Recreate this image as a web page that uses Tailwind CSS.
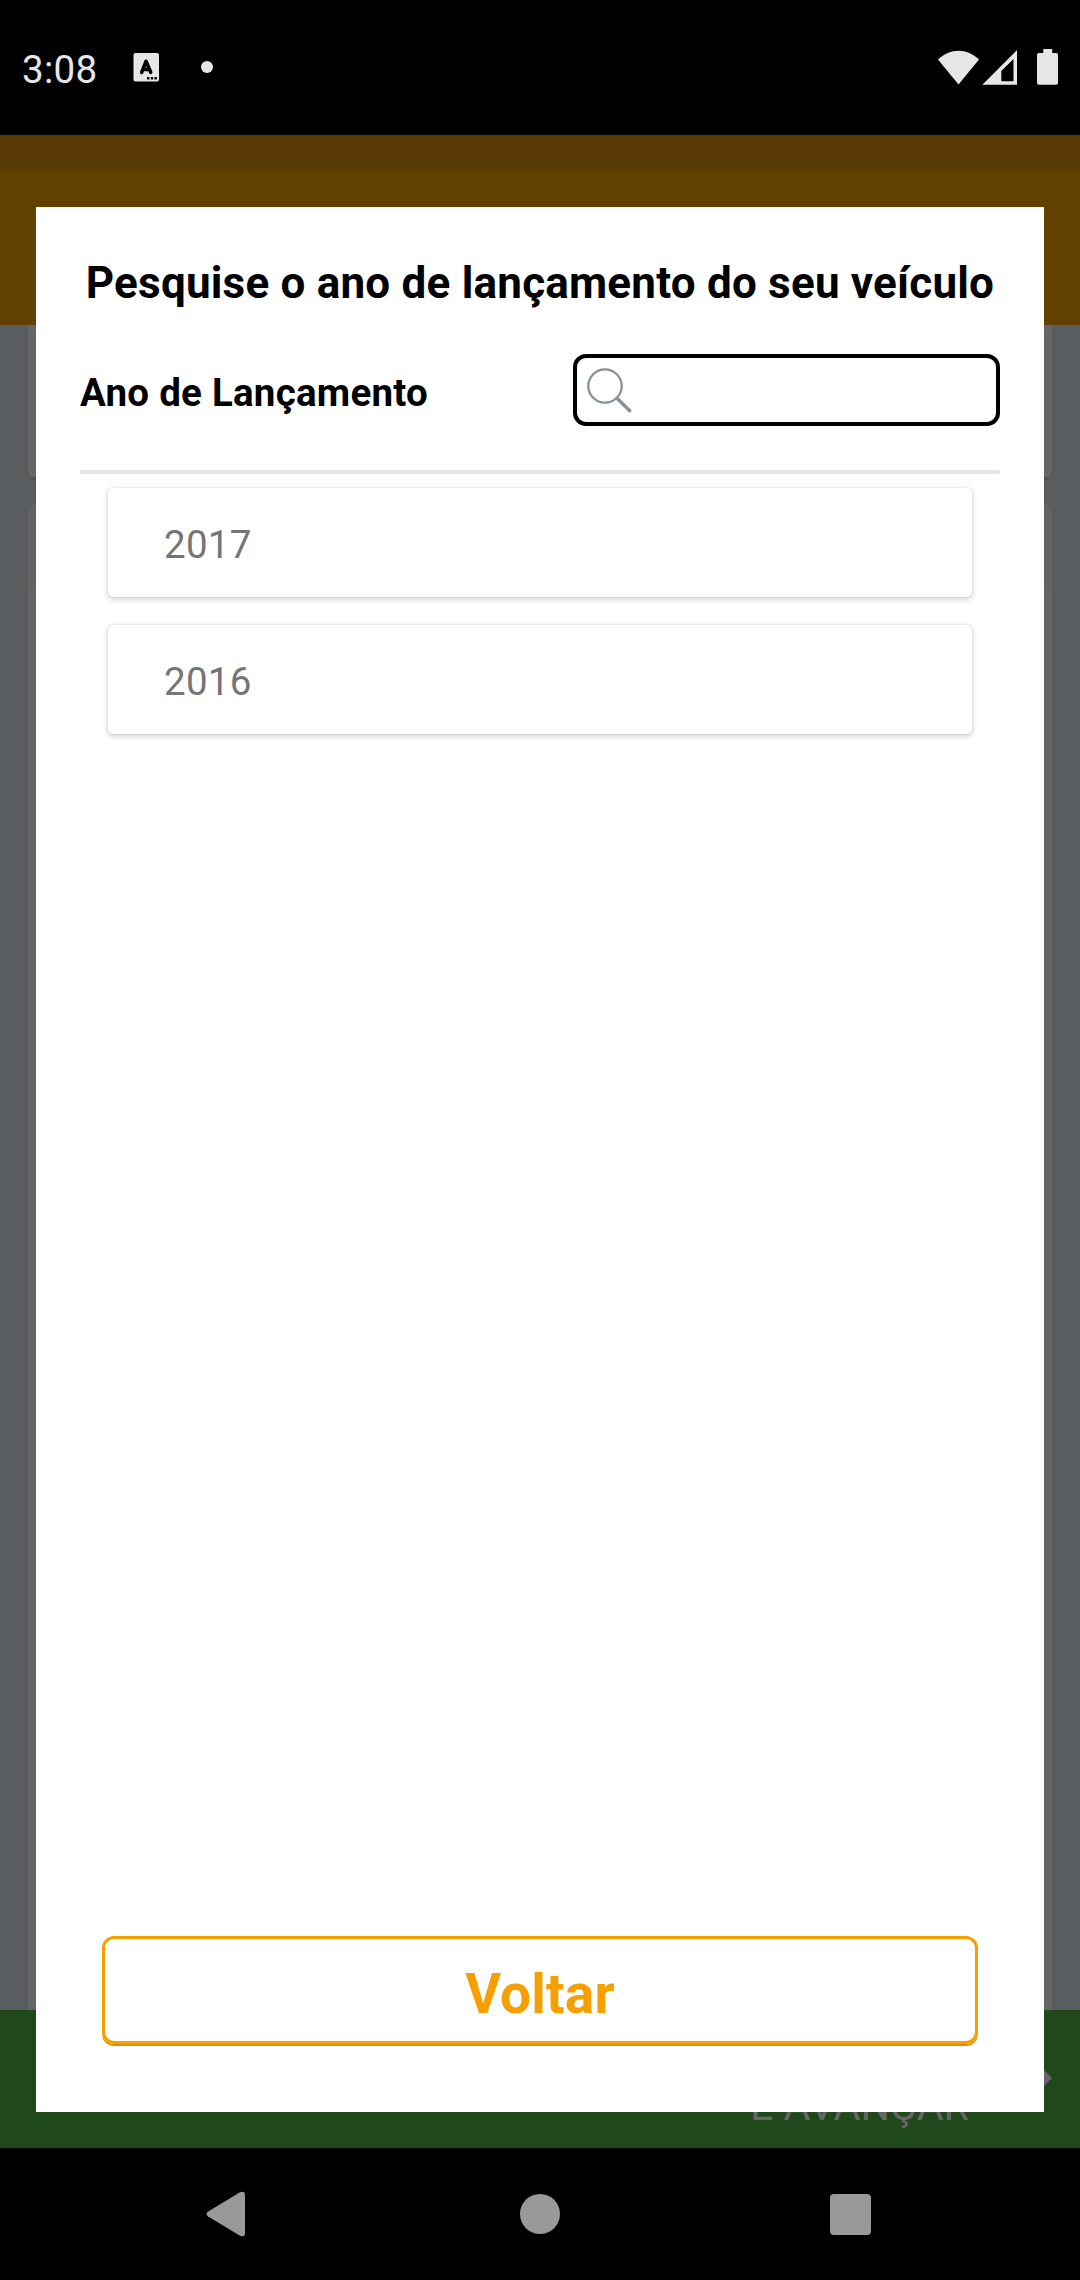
<!DOCTYPE html>
<html lang="pt-BR">
<head>
<meta charset="utf-8">
<title>Ano de Lançamento</title>
<script src="https://cdn.jsdelivr.net/npm/@tailwindcss/browser@4"></script>
</head>
<body class="bg-black font-[Roboto,sans-serif]">
<div class="relative w-[1080px] h-[2280px] overflow-hidden flex flex-col bg-black">
  <!-- status bar -->
  <header class="h-[135px] shrink-0 flex items-start justify-between pl-[22px] pt-[46px] pr-[20px]">
    <div class="flex items-start">
      <span class="w-[111px] pt-[1px] text-[38.5px] leading-[46px] tracking-[0.3px] text-[#e6e6e6]">3:08</span>
      <svg class="mt-[6px]" width="80" height="30" viewBox="0 0 80 30">
        <rect x="0.5" y="1" width="25.5" height="28.5" rx="2" fill="#e6e6e6"/>
        <path d="M8.7 20.3L13 9.300L17.700 20.300M10 17.500H16.500" fill="none" stroke="#000" stroke-width="3.600" stroke-linecap="round" stroke-linejoin="round"/>
        <path d="M14 25h2.4v2.4H14zM17.8 25h2.4v2.4h-2.4zM21.5 25h2.4v2.4h-2.4z" fill="#000"/>
        <circle cx="74" cy="15" r="6" fill="#e6e6e6"/>
      </svg>
    </div>
    <svg class="mt-[2px]" width="124" height="40" viewBox="936 48 124 40" fill="#e6e6e6">
      <path d="M938 59.5C950 47.8 967 47.8 979 59.5L958.5 84.5Z"/>
      <path fill-rule="evenodd" d="M982.3 84.7L1017 50V84.7ZM1001.3 81.3H1013.5V59L1001.3 71Z"/>
      <path d="M1043.3 49h8.9v4h3.800q2 0 2 2v27.700q0 2-2 2h-17q-2 0-2-2V55q0-2 2-2h4.300z"/>
    </svg>
  </header>

  <!-- dimmed page behind the dialog -->
  <div class="h-[36px] shrink-0 bg-[#593904]"></div>
  <div class="h-[154px] shrink-0 bg-[#624000]"></div>
  <main class="h-[1685px] shrink-0 bg-[#595d60] px-[28px] flex flex-col gap-[28px] overflow-hidden">
    <div class="h-[152px] shrink-0 rounded-b-[6px] bg-[#676665] shadow-[0_4px_5px_-3px_rgba(0,0,0,0.3)]"></div>
    <div class="flex-1 rounded-t-[6px] bg-[#676665] overflow-hidden">
      <div class="h-[83px] bg-[#616365]"></div>
    </div>
  </main>
  <footer class="h-[138px] shrink-0 bg-[#1f481b] flex items-end justify-end pr-[28px] text-[#666]">
    <span class="text-[41.25px] leading-[48px] mb-[18px] mr-[49px] whitespace-nowrap">E AVANÇAR</span>
    <svg class="mb-[53px]" width="34" height="34" viewBox="0 0 34 34" fill="currentColor"><path d="M19 2L34 17L19 32L15 28L23 20H0V14H23L15 6Z"/></svg>
  </footer>

  <!-- navigation bar -->
  <nav class="h-[132px] shrink-0 flex items-center justify-between pl-[205px] pr-[209px]">
    <svg width="42" height="48" viewBox="0 0 42 48"><path d="M2.800 21.800L35 2.300Q40 .5 40 5V43Q40 47.500 35 45.700L2.800 26.200Q.2 24 2.800 21.800Z" fill="#999"/></svg>
    <div class="size-[40px] ml-[3px] rounded-full bg-[#999]"></div>
    <div class="size-[41px] rounded-[4px] bg-[#999]"></div>
  </nav>

  <!-- dialog -->
  <section class="absolute left-[36px] top-[207px] w-[1008px] h-[1905px] bg-white flex flex-col px-[44px]">
    <h1 class="mt-[50px] h-[52px] text-center text-[44px] leading-[52px] tracking-[0.21px] font-bold text-black whitespace-nowrap">Pesquise o ano de lançamento do seu veículo</h1>
    <div class="mt-[45px] h-[72px] flex items-center justify-between">
      <span class="text-[38.5px] leading-[46px] tracking-[0.25px] font-bold text-black mt-[6px]">Ano de Lançamento</span>
      <div class="w-[427px] h-[72px] rounded-[13px] border-[4px] border-black">
        <svg width="70" height="64" viewBox="577 358 70 64" fill="none" stroke="#87919a">
          <circle cx="605" cy="386" r="16.700" stroke-width="2.300"/>
          <path d="M617.300 398.500L629.700 410.700" stroke-width="3.400" stroke-linecap="round"/>
        </svg>
      </div>
    </div>
    <div class="mt-[44px] h-[4px] bg-[#e0e6eb]"></div>
    <ul class="mt-[14px] px-[28px] flex flex-col gap-[28px] text-[38.5px] leading-[46px] tracking-[0.3px] text-[#757575]">
      <li class="h-[109px] rounded-[5px] bg-white pl-[56px] pt-[34px] shadow-[0_2px_6px_rgba(0,0,0,0.2),0_0_2px_rgba(0,0,0,0.12)]">2017</li>
      <li class="h-[109px] rounded-[5px] bg-white pl-[56px] pt-[34px] shadow-[0_2px_6px_rgba(0,0,0,0.2),0_0_2px_rgba(0,0,0,0.12)]">2016</li>
    </ul>
    <button class="mt-auto mb-[68px] mx-[22px] h-[108px] shrink-0 rounded-[12px] border-[3px] border-[#f5a000] shadow-[0_2px_0_#dc9006] text-[55px] leading-[64px] tracking-[0.2px] font-bold text-[#f5a000] pt-[7px]">Voltar</button>
  </section>
</div>
</body>
</html>
